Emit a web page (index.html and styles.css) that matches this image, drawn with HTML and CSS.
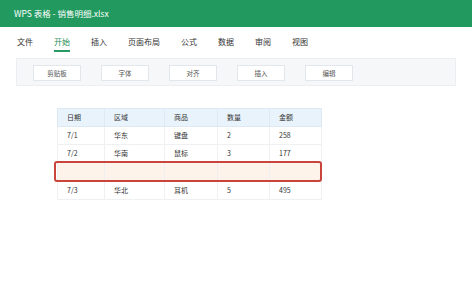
FILE: index.html
```html
<!DOCTYPE html>
<html lang="zh-CN">
<head>
  <meta charset="UTF-8">
  <title>WPS 表格 - 销售明细.xlsx</title>
  <link rel="stylesheet" href="styles.css">
</head>
<body>
  <div class="titlebar">WPS 表格 - 销售明细.xlsx</div>

  <div class="tabs">
    <span class="tab">文件</span>
    <span class="tab active">开始</span>
    <span class="tab">插入</span>
    <span class="tab">页面布局</span>
    <span class="tab">公式</span>
    <span class="tab">数据</span>
    <span class="tab">审阅</span>
    <span class="tab">视图</span>
  </div>

  <div class="ribbon">
    <div class="group">剪贴板</div>
    <div class="group">字体</div>
    <div class="group">对齐</div>
    <div class="group">插入</div>
    <div class="group">编辑</div>
  </div>

  <div class="sheet">
    <table>
      <colgroup>
        <col class="c1">
        <col class="c2">
        <col class="c3">
        <col class="c4">
        <col class="c5">
      </colgroup>
      <thead>
        <tr><th>日期</th><th>区域</th><th>商品</th><th>数量</th><th>金额</th></tr>
      </thead>
      <tbody>
        <tr><td>7/1</td><td>华东</td><td>键盘</td><td>2</td><td>258</td></tr>
        <tr><td>7/2</td><td>华南</td><td>鼠标</td><td>3</td><td>177</td></tr>
        <tr class="new-row"><td></td><td></td><td></td><td></td><td></td></tr>
        <tr><td>7/3</td><td>华北</td><td>耳机</td><td>5</td><td>495</td></tr>
      </tbody>
    </table>
    <div class="insert-mark"></div>
  </div>
</body>
</html>
```

FILE: styles.css
```css
body {
  margin: 0;
  background: #ffffff;
  font-family: "Noto Sans CJK SC", "Noto Sans", sans-serif;
  color: #333333;
}

.titlebar {
  height: 27px;
  line-height: 26px;
  padding-left: 14px;
  background-color: #229a5f;
  color: #ffffff;
  font-size: 8.5px;
}

.tabs {
  display: flex;
  padding: 9px 0 0 17px;
}

.tab {
  font-size: 8px;
  line-height: 12px;
  padding-bottom: 2px;
  margin-right: 21px;
  border-bottom: 2px solid transparent;
}

.tab.active {
  color: #1f8f56;
  border-bottom-color: #2a9a63;
}

.ribbon {
  display: flex;
  gap: 20px;
  margin: 6px 16px 0 16px;
  padding: 6px 16px 4px 16px;
  background-color: #f5f7f9;
  border: 1px solid #eceef1;
}

.group {
  width: 46px;
  height: 14px;
  line-height: 14px;
  text-align: center;
  font-size: 6.5px;
  color: #555555;
  background-color: #ffffff;
  border: 1px solid #e3e6ea;
}

.sheet {
  position: relative;
  margin: 22px 0 0 57px;
  width: 265px;
}

table {
  border-collapse: collapse;
  font-size: 7px;
  line-height: 9px;
  table-layout: fixed;
  width: 264px;
}

.c1 { width: 47px; }
.c2 { width: 60px; }
.c3 { width: 53px; }
.c4 { width: 52px; }
.c5 { width: 52px; }

th, td {
  height: 16px;
  padding: 0 0 1px 9px;
  text-align: left;
  font-weight: normal;
  border: 1px solid #eef0f2;
  white-space: nowrap;
  overflow: hidden;
}

th {
  background-color: #e9f3fc;
  border-color: #dfe9f3;
}

.new-row td {
  background-color: #fdf3ea;
  height: 17px;
}

.insert-mark {
  position: absolute;
  left: -3px;
  top: 53px;
  width: 264px;
  height: 17px;
  border: 2px solid #c9443b;
  border-radius: 3px;
}
```
